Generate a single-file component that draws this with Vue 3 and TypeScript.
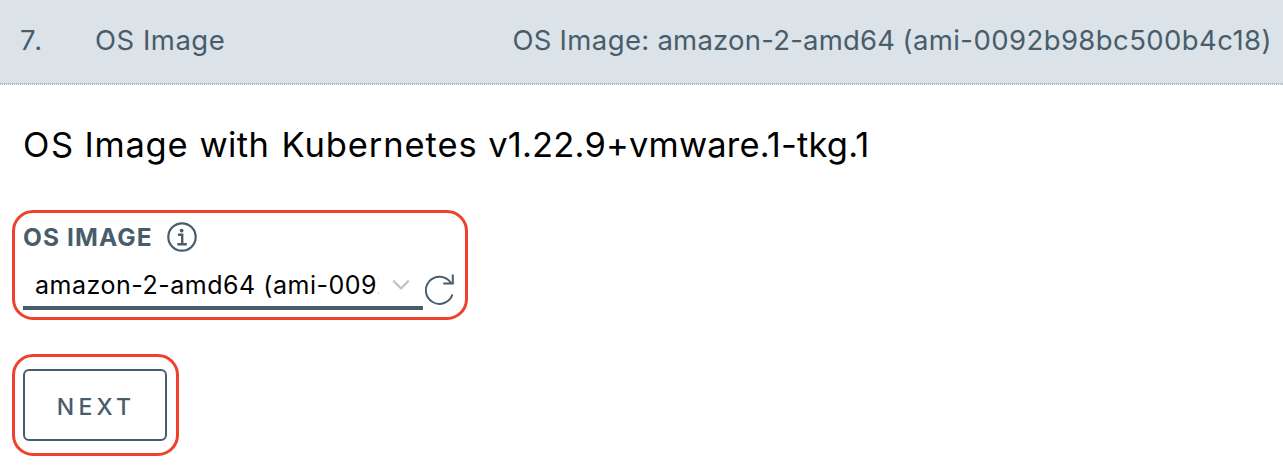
<script setup lang="ts">
interface Word {
  text: string
  tracking: number
  gap: number
}

const title = 'OS Image'
const summary: Word[] = [
  { text: 'OS', tracking: 0.3, gap: 0 },
  { text: 'Image:', tracking: 0.4, gap: 0 },
  { text: 'amazon-2-amd64', tracking: 0.22, gap: 0 },
  { text: '(ami-0092b98bc500b4c18)', tracking: 0.42, gap: -0.6 },
]
const heading: Word[] = [
  { text: 'OS', tracking: 1.6, gap: 0 },
  { text: 'Image', tracking: 0.7, gap: 0.2 },
  { text: 'with', tracking: 0.4, gap: 1.5 },
  { text: 'Kubernetes', tracking: 0.9, gap: 2.5 },
  { text: 'v1.22.9+vmware.1-tkg.1', tracking: 0.17, gap: 1 },
]
const selectedImage = 'amazon-2-amd64 (ami-0092b98bc500b4c18)'
</script>

<template>
  <main class="wizard">
    <header class="step-header">
      <span class="step-number">7.</span>
      <span class="step-title">{{ title }}</span>
      <span class="step-summary">
        <template v-for="word in summary" :key="word.text"><span :style="{ letterSpacing: word.tracking + 'px', marginLeft: word.gap + 'px' }">{{ word.text }}</span>{{ ' ' }}</template>
      </span>
    </header>
    <section class="step-body">
      <h1 class="heading">
        <template v-for="word in heading" :key="word.text"><span :style="{ letterSpacing: word.tracking + 'px', marginLeft: word.gap + 'px' }">{{ word.text }}</span>{{ ' ' }}</template>
      </h1>
      <div class="highlight image-field">
        <div class="label-row">
          <label class="label">OS IMAGE</label>
          <svg class="info" width="30" height="30" viewBox="0 0 30 30" fill="none" stroke="#485d6c">
            <circle cx="15" cy="15" r="13.7" stroke-width="2.2" />
            <circle cx="14.6" cy="8.6" r="1.9" fill="#485d6c" stroke="none" />
            <path d="M11 12.8H15.2V22.2M10.4 22.2H19.8" stroke-width="2.4" />
          </svg>
        </div>
        <div class="control-row">
          <div class="select">
            <span class="value">{{ selectedImage }}</span>
            <svg class="chevron" width="18" height="12" viewBox="0 0 18 12" fill="none">
              <path d="M1.2 1.6L9 9.4L16.8 1.6" stroke="#c1c4c6" stroke-width="2.2" />
            </svg>
          </div>
          <svg class="refresh" width="30" height="32" viewBox="0 0 30 32" fill="none" stroke="#485d6c">
            <path d="M27.4 20.5A13.6 13.6 0 1 1 25.8 8.8M18.2 9.6H27.8V0.4" stroke-width="2" />
          </svg>
        </div>
      </div>
      <div class="highlight next-area">
        <button class="next" type="button">NEXT</button>
      </div>
    </section>
  </main>
</template>

<style>
body {
  background: #fff;
}
</style>

<style scoped>
.wizard {
  width: 1283px;
  height: 470px;
  overflow: hidden;
  font-family: Inter, "Liberation Sans", sans-serif;
  color: #485d6c;
  white-space: nowrap;
}
.step-header {
  box-sizing: border-box;
  height: 84px;
  padding: 0 11px 4px 20px;
  display: flex;
  align-items: center;
  background: #dbe2e8;
  border-bottom: 1px solid #bfc3c5;
  font-size: 27.5px;
}
.step-number {
  width: 75px;
  letter-spacing: 2px;
}
.step-title {
  letter-spacing: 0.5px;
}
.step-summary {
  margin-left: auto;
}
.step-body {
  padding: 0 12px;
  border-top: 1px dotted #b5babd;
}
.heading {
  margin: 38px 0 0 11px;
  height: 44px;
  line-height: 44px;
  font-size: 34.5px;
  font-weight: 400;
  color: #000;
}
.highlight {
  box-sizing: border-box;
  border: 3px solid #ee402b;
  border-radius: 21px;
}
.image-field {
  width: 456px;
  height: 110px;
  margin-top: 43px;
  padding: 9px 8px;
}
.label-row {
  display: flex;
  align-items: center;
  height: 30px;
}
.label {
  width: 144px;
  font-size: 24.5px;
  font-weight: 700;
  letter-spacing: 1.1px;
}
.control-row {
  display: flex;
  margin-top: 12px;
}
.select {
  box-sizing: border-box;
  width: 400px;
  height: 46px;
  padding: 0 13px 0 12px;
  display: flex;
  align-items: center;
  border-bottom: 4px solid #485d6c;
}
.value {
  width: 344px;
  overflow: hidden;
  font-size: 25px;
  letter-spacing: 0.52px;
  color: #000;
}
.chevron {
  margin-left: 13px;
  flex: none;
}
.refresh {
  margin: 10px 0 0 2px;
  flex: none;
}
.next-area {
  width: 167px;
  height: 102px;
  margin-top: 34px;
  padding: 12px 8px;
}
.next {
  box-sizing: border-box;
  display: block;
  width: 144px;
  height: 72px;
  padding: 4px 0 0 2px;
  border: 2px solid #485d6c;
  border-radius: 6px;
  background: #fff;
  color: #485d6c;
  font: 500 23px Inter, "Liberation Sans", sans-serif;
  letter-spacing: 4.2px;
}
</style>
